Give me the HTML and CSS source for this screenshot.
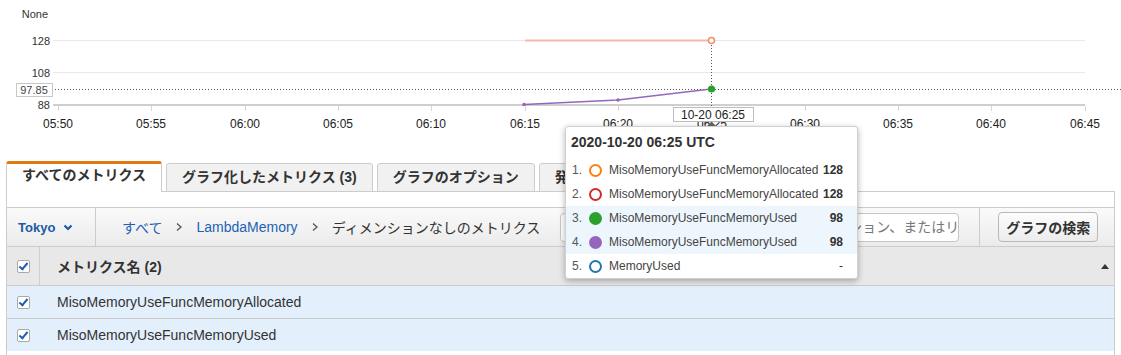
FILE: index.html
```html
<!DOCTYPE html>
<html lang="ja">
<head>
    <meta charset="UTF-8">
    <title>CloudWatch メトリクス</title>
    <link rel="stylesheet" href="styles.css">
</head>
<body>
<div class="page">
    <svg class="chart" width="1121" height="161" viewBox="0 0 1121 161">
        <g class="ylabels">
            <text x="48" y="18">None</text>
            <text x="50" y="45">128</text>
            <text x="50" y="77">108</text>
            <text x="50" y="109">88</text>
        </g>
        <line x1="53" y1="40.5" x2="1085" y2="40.5" stroke="#e8e8e8"/>
        <line x1="53" y1="72.5" x2="1085" y2="72.5" stroke="#e8e8e8"/>
        <line x1="53" y1="105" x2="1085" y2="105" stroke="#cfcfcf" stroke-width="2"/>
        <g stroke="#d6d6d6">
            <line x1="58.5" y1="106" x2="58.5" y2="111"/>
            <line x1="151.5" y1="106" x2="151.5" y2="111"/>
            <line x1="245.5" y1="106" x2="245.5" y2="111"/>
            <line x1="338.5" y1="106" x2="338.5" y2="111"/>
            <line x1="431.5" y1="106" x2="431.5" y2="111"/>
            <line x1="525.5" y1="106" x2="525.5" y2="111"/>
            <line x1="618.5" y1="106" x2="618.5" y2="111"/>
            <line x1="805.5" y1="106" x2="805.5" y2="111"/>
            <line x1="898.5" y1="106" x2="898.5" y2="111"/>
            <line x1="991.5" y1="106" x2="991.5" y2="111"/>
            <line x1="1085.5" y1="106" x2="1085.5" y2="111"/>
        </g>
        <g class="xlabels">
            <text x="58" y="128">05:50</text>
            <text x="151" y="128">05:55</text>
            <text x="245" y="128">06:00</text>
            <text x="338" y="128">06:05</text>
            <text x="431" y="128">06:10</text>
            <text x="525" y="128">06:15</text>
            <text x="618" y="128">06:20</text>
            <text x="712" y="128">06:25</text>
            <text x="805" y="128">06:30</text>
            <text x="898" y="128">06:35</text>
            <text x="991" y="128">06:40</text>
            <text x="1085" y="128">06:45</text>
        </g>

        <!-- 十字線 -->
        <line x1="55" y1="89.5" x2="1121" y2="89.5" stroke="#555" stroke-dasharray="1,2"/>
        <line x1="711.5" y1="42" x2="711.5" y2="108" stroke="#555" stroke-dasharray="1,2"/>
        <rect x="16.5" y="83.5" width="36" height="13" fill="#fff" stroke="#c8c8c8"/>
        <text class="hover-y" x="34" y="94">97.85</text>

        <!-- データ -->
        <line x1="525" y1="40.5" x2="709" y2="40.5" stroke="#f6b9a5" stroke-width="2"/>
        <circle cx="711.5" cy="40.5" r="3" fill="#fff" stroke="#f28f6b" stroke-width="1.5"/>
        <polyline points="524,104.5 618,100 711,89" fill="none" stroke="#9467bd" stroke-width="1.6"/>
        <circle cx="524" cy="104.5" r="1.8" fill="#9467bd"/>
        <circle cx="618" cy="100" r="1.8" fill="#9467bd"/>
        <circle cx="711.5" cy="89" r="3.6" fill="#2ca02c"/>

        <rect x="673.5" y="107.5" width="80" height="14" fill="#fff" stroke="#bdbdbd"/>
        <text class="hover-x" x="713" y="119">10-20 06:25</text>
        <polygon points="706,127 711.5,121.5 717,127" fill="#666"/>
    </svg>

    <div class="tabs">
        <div class="tab active">すべてのメトリクス</div>
        <div class="tab">グラフ化したメトリクス (3)</div>
        <div class="tab">グラフのオプション</div>
        <div class="tab">発信元</div>
    </div>

    <div class="panel">
        <div class="toolbar">
            <div class="region">
                Tokyo
                <svg width="10" height="7" viewBox="0 0 10 7"><polyline points="1.5,1.5 5,5 8.5,1.5" fill="none" stroke="#1c5aa6" stroke-width="2.2"/></svg>
            </div>
            <div class="crumbs">
                <a href="#">すべて</a>
                <svg width="8" height="10" viewBox="0 0 8 10"><polyline points="2,1.5 6,5 2,8.5" fill="none" stroke="#555" stroke-width="1.3"/></svg>
                <a href="#">LambdaMemory</a>
                <svg width="8" height="10" viewBox="0 0 8 10"><polyline points="2,1.5 6,5 2,8.5" fill="none" stroke="#555" stroke-width="1.3"/></svg>
                <span>ディメンションなしのメトリクス</span>
            </div>
            <div class="search"><span>メトリクス、名前空間、リソース、ディメンション、またはリ</span></div>
            <div class="actions">
                <button class="graph-search">グラフの検索</button>
            </div>
        </div>

        <div class="thead">
            <div class="check-cell"><span class="checkbox"></span></div>
            <div class="name-cell">メトリクス名 (2)</div>
            <div class="sort"></div>
        </div>
        <div class="row">
            <div class="check-cell"><span class="checkbox"></span></div>
            <div class="name-cell">MisoMemoryUseFuncMemoryAllocated</div>
        </div>
        <div class="row">
            <div class="check-cell"><span class="checkbox"></span></div>
            <div class="name-cell">MisoMemoryUseFuncMemoryUsed</div>
        </div>
    </div>

    <div class="popup">
        <div class="popup-title">2020-10-20 06:25 UTC</div>
        <ul class="legend">
            <li><span class="num">1.</span><span class="dot ring orange"></span><span class="label">MisoMemoryUseFuncMemoryAllocated</span><span class="value">128</span></li>
            <li><span class="num">2.</span><span class="dot ring red"></span><span class="label">MisoMemoryUseFuncMemoryAllocated</span><span class="value">128</span></li>
            <li class="hl"><span class="num">3.</span><span class="dot green"></span><span class="label">MisoMemoryUseFuncMemoryUsed</span><span class="value">98</span></li>
            <li class="hl"><span class="num">4.</span><span class="dot purple"></span><span class="label">MisoMemoryUseFuncMemoryUsed</span><span class="value">98</span></li>
            <li><span class="num">5.</span><span class="dot ring blue"></span><span class="label">MemoryUsed</span><span class="value empty">-</span></li>
        </ul>
    </div>
</div>
</body>
</html>
```

FILE: styles.css
```css
body {
    margin: 0;
    font-family: "Liberation Sans", "Noto Sans CJK JP", sans-serif;
    font-size: 14px;
    color: #333;
    background-color: #fff;
}

.page {
    position: relative;
    width: 1121px;
    height: 355px;
    overflow: hidden;
}

.chart {
    display: block;
}

.chart text {
    font-family: "Liberation Sans", sans-serif;
    fill: #222;
}

.ylabels text {
    font-size: 11px;
    text-anchor: end;
    fill: #333;
}

.xlabels text {
    font-size: 12px;
    text-anchor: middle;
}

.chart .hover-y {
    font-size: 11px;
    text-anchor: middle;
    fill: #444;
}

.chart .hover-x {
    font-size: 12px;
    text-anchor: middle;
}

/* タブ */
.tabs {
    display: flex;
    align-items: flex-end;
    gap: 4px;
    height: 31px;
    padding-left: 6px;
    margin-bottom: -1px;
    position: relative;
    z-index: 1;
}

.tab {
    height: 29px;
    box-sizing: border-box;
    padding: 3px 15px 0;
    line-height: 20px;
    font-weight: bold;
    background-color: #f1f1f1;
    border: 1px solid #ccc;
    border-radius: 3px 3px 0 0;
    white-space: nowrap;
}

.tab.active {
    height: 31px;
    padding-top: 1px;
    background-color: #fff;
    border-top: 3px solid #e07a10;
    border-bottom: none;
}

/* パネル */
.panel {
    margin-left: 6px;
    width: 1109px;
    box-sizing: border-box;
    border: 1px solid #ccc;
    border-bottom: none;
    padding-top: 15px;
    height: 170px;
}

.toolbar {
    display: flex;
    align-items: center;
    height: 38px;
    border-top: 1px solid #ccc;
    border-bottom: 1px solid #ccc;
    background: linear-gradient(#fafafa, #ebebeb);
}

.region {
    display: flex;
    align-items: center;
    gap: 8px;
    width: 89px;
    height: 100%;
    box-sizing: border-box;
    padding-left: 11px;
    border-right: 1px solid #ccc;
    font-size: 13px;
    font-weight: bold;
    color: #1c5aa6;
}

.crumbs {
    display: flex;
    align-items: center;
    gap: 13px;
    padding-left: 26px;
    white-space: nowrap;
}

.crumbs a {
    color: #1f62b3;
    text-decoration: none;
}

.search {
    margin-left: 20px;
    width: 399px;
    height: 29px;
    box-sizing: border-box;
    padding: 0 3px 0 9px;
    border: 1px solid #c6c6c6;
    border-radius: 4px;
    background-color: #fff;
    line-height: 27px;
    color: #777;
    white-space: nowrap;
    overflow: hidden;
    text-align: right;
}

.actions {
    display: flex;
    align-items: center;
    height: 100%;
    margin-left: 20px;
    padding-left: 18px;
    border-left: 1px solid #ccc;
}

.graph-search {
    width: 100px;
    height: 30px;
    padding: 0;
    font-family: inherit;
    font-size: 14px;
    font-weight: bold;
    color: #333;
    background: linear-gradient(#fdfdfd, #ececec);
    border: 1px solid #b9b9b9;
    border-radius: 4px;
}

/* テーブル */
.thead {
    display: flex;
    align-items: center;
    height: 38px;
    background-color: #e8e8e8;
    border-bottom: 1px solid #ccc;
}

.check-cell {
    display: flex;
    align-items: center;
    width: 33px;
    height: 100%;
    box-sizing: border-box;
    padding-left: 10px;
}

.thead .check-cell {
    border-right: 1px solid #cfcfcf;
}

.name-cell {
    padding-left: 17px;
    white-space: nowrap;
}

.thead .name-cell {
    font-weight: bold;
    flex: 1;
}

.sort {
    width: 0;
    height: 0;
    margin-right: 5px;
    border-left: 4px solid transparent;
    border-right: 4px solid transparent;
    border-bottom: 5px solid #333;
}

.row {
    display: flex;
    align-items: center;
    height: 32px;
    background-color: #e3f0fc;
    border-bottom: 1px solid #c9c9c9;
}

.row:last-child {
    border-bottom: none;
}

.checkbox {
    position: relative;
    width: 11px;
    height: 11px;
    border: 1px solid #a9a9a9;
    border-radius: 2px;
    background-color: #fff;
}

.checkbox::after {
    content: "";
    position: absolute;
    left: 3px;
    top: 0;
    width: 3px;
    height: 7px;
    border: solid #1d5fb4;
    border-width: 0 2px 2px 0;
    transform: rotate(40deg);
}

/* ツールチップ */
.popup {
    position: absolute;
    left: 565px;
    top: 126px;
    width: 293px;
    box-sizing: border-box;
    background-color: #fff;
    border: 1px solid #d0d0d0;
    border-radius: 3px;
    box-shadow: 0 2px 6px rgba(0, 0, 0, 0.3);
    z-index: 5;
}

.popup-title {
    height: 31px;
    line-height: 31px;
    padding-left: 5px;
    font-size: 14px;
    font-weight: bold;
    color: #333;
}

.legend {
    list-style-type: none;
    margin: 0;
    padding: 0;
}

.legend li {
    display: flex;
    align-items: center;
    height: 24px;
    padding: 0 14px 0 6px;
    font-size: 12px;
    color: #444;
}

.legend li.hl {
    background-color: #eef6fd;
}

.num {
    width: 17px;
    color: #555;
}

.dot {
    flex: none;
    width: 13px;
    height: 13px;
    box-sizing: border-box;
    border-radius: 50%;
    margin-right: 7px;
}

.dot.ring {
    border: 2.5px solid;
    background-color: #fff;
}

.dot.orange { border-color: #ff7f0e; }
.dot.red { border-color: #d62728; }
.dot.blue { border-color: #1f77b4; }
.dot.green { background-color: #2ca02c; }
.dot.purple { background-color: #9467bd; }

.label {
    flex: 1;
    white-space: nowrap;
}

.value {
    font-weight: bold;
    color: #333;
}

.value.empty {
    font-weight: normal;
}
```
